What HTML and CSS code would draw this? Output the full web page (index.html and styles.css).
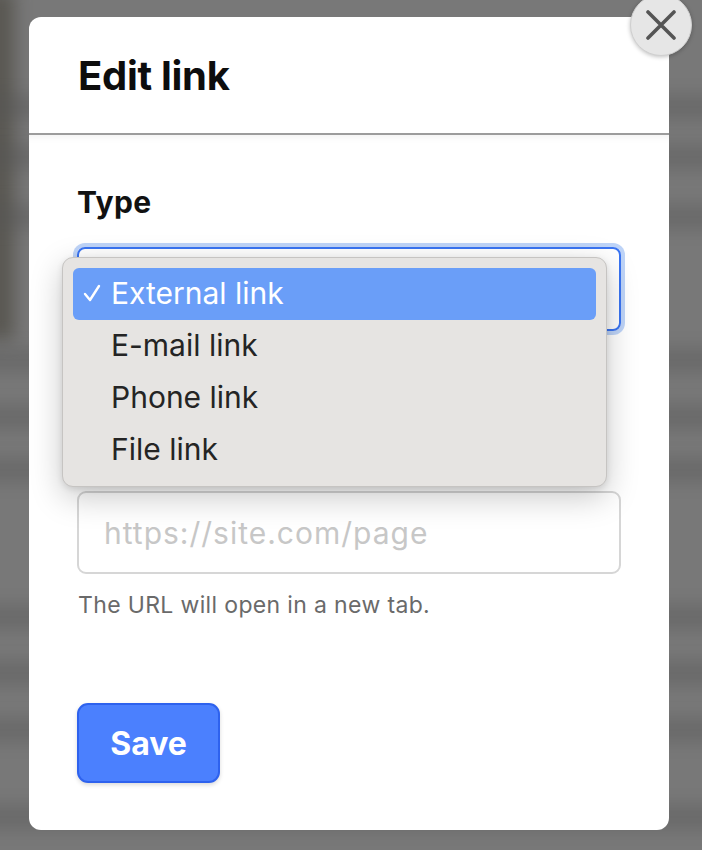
FILE: index.html
```html
<!DOCTYPE html>
<html lang="en">
<head>
<meta charset="utf-8">
<title>Edit link</title>
<link rel="stylesheet" href="styles.css">
</head>
<body>
<div class="backdrop" aria-hidden="true">
  <div class="blob"></div>
  <div class="lines">
    <div class="bar b1"></div>
    <div class="bar b2"></div>
    <div class="bar b3"></div>
    <div class="bar b4"></div>
    <div class="bar b5"></div>
    <div class="bar b6"></div>
    <div class="bar b7"></div>
    <div class="bar b8"></div>
    <div class="bar b9"></div>
    <div class="bar b10"></div>
  </div>
</div>

<div class="modal" role="dialog" aria-labelledby="modal-title">
  <button class="close" aria-label="Close">
    <svg width="30" height="30" viewBox="0 0 30 30" aria-hidden="true">
      <path d="M2 2 L28 28 M28 2 L2 28" stroke="#555" stroke-width="3.6" stroke-linecap="round" fill="none"/>
    </svg>
  </button>
  <header class="modal-header">
    <h1 id="modal-title">Edit link</h1>
  </header>
  <div class="modal-body">
    <div class="field">
      <div class="label">Type</div>
      <div class="select-wrap">
        <div class="select" aria-label="Type"></div>
        <ul class="menu">
          <li class="item selected">
            <svg class="check" width="18" height="18" viewBox="0 0 18 18" aria-hidden="true">
              <path d="M2 10 L7 16 L16 2" stroke="#fff" stroke-width="2.4" stroke-linecap="round" stroke-linejoin="round" fill="none"/>
            </svg>
            External link
          </li>
          <li class="item">E-mail link</li>
          <li class="item">Phone link</li>
          <li class="item">File link</li>
        </ul>
      </div>
    </div>
    <div class="field url-field">
      <div class="input">https://site.com/page</div>
      <p class="help">The URL will open in a new tab.</p>
    </div>
    <button class="save">Save</button>
  </div>
</div>
</body>
</html>
```

FILE: styles.css
```css
html, body {
  margin: 0;
  padding: 0;
}

body {
  font-family: Inter, "Noto Sans", "Liberation Sans", sans-serif;
  background: #777777;
  min-height: 850px;
  overflow: hidden;
}

/* blurred page behind the dialog */
.backdrop {
  position: fixed;
  inset: 0;
  background: #787878;
  overflow: hidden;
}

.blob {
  position: absolute;
  left: -16px;
  top: -10px;
  width: 30px;
  height: 350px;
  background: #4b4840;
  filter: blur(9px);
  opacity: 0.7;
}

.lines {
  display: flex;
  flex-direction: column;
}

.bar {
  height: 18px;
  margin: 0 -30px;
  background: #555555;
  filter: blur(10px);
  opacity: 0.55;
}

.b1 { margin-top: 98px; }
.b2 { margin-top: 32px; }
.b3 { margin-top: 42px; }
.b4 { margin-top: 125px; }
.b5 { margin-top: 39px; }
.b6 { margin-top: 35px; }
.b7 { margin-top: 129px; }
.b8 { margin-top: 38px; }
.b9 { margin-top: 39px; }
.b10 { margin-top: 69px; }

/* dialog */
.modal {
  position: relative;
  z-index: 1;
  width: 640px;
  height: 813px;
  margin: 17px 0 0 29px;
  background: #ffffff;
  border-radius: 12px;
  box-sizing: border-box;
}

.close {
  position: absolute;
  left: 601px;
  top: -23px;
  width: 62px;
  height: 62px;
  border-radius: 50%;
  border: 1px solid #cfcfcf;
  background: #e6e6e6;
  box-shadow: 0 1px 4px rgba(0, 0, 0, 0.25);
  display: flex;
  align-items: center;
  justify-content: center;
  padding: 0;
}

.modal-header {
  padding: 35px 48px 33px 49px;
  border-bottom: 2px solid #9c9c9c;
}

.modal-header h1 {
  margin: 0;
  font-size: 40px;
  line-height: 48px;
  font-weight: 700;
  color: #0d0d0d;
  letter-spacing: -0.3px;
}

.modal-body {
  padding: 50px 48px 48px 48px;
  box-shadow: inset 0 9px 8px -8px rgba(0, 0, 0, 0.07);
}

.label {
  display: block;
  font-size: 30px;
  line-height: 34px;
  font-weight: 700;
  color: #111;
  letter-spacing: 0.4px;
  margin-bottom: 28px;
}

.select-wrap {
  position: relative;
}

.select {
  height: 84px;
  box-sizing: border-box;
  border: 2px solid #3a74f2;
  border-radius: 8px;
  box-shadow: 0 0 0 4px rgba(110, 160, 240, 0.45);
}

.menu {
  position: absolute;
  left: -15px;
  top: 10px;
  width: 545px;
  box-sizing: border-box;
  margin: 0;
  padding: 10px;
  list-style: none;
  background: #e6e4e2;
  border: 1px solid #c6c4c2;
  border-radius: 11px;
  box-shadow: 0 10px 32px rgba(0, 0, 0, 0.22), 0 2px 6px rgba(0, 0, 0, 0.1);
  z-index: 2;
}

.item {
  position: relative;
  height: 52px;
  line-height: 50px;
  padding-left: 38px;
  font-size: 30px;
  color: #242424;
  border-radius: 6px;
}

.item.selected {
  background: #6a9ef8;
  color: #ffffff;
}

.check {
  position: absolute;
  left: 10px;
  top: 16px;
}

.url-field {
  margin-top: 160px;
}

.input {
  height: 83px;
  box-sizing: border-box;
  border: 2px solid #d6d6d6;
  border-radius: 9px;
  padding-left: 25px;
  display: flex;
  align-items: center;
  font-size: 30px;
  letter-spacing: 1px;
  color: #c7c7c7;
}

.help {
  margin: 18px 0 0 1px;
  font-size: 23px;
  line-height: 26px;
  letter-spacing: 0.35px;
  color: #6a6a6a;
}

.save {
  margin-top: 85px;
  width: 143px;
  height: 80px;
  box-sizing: border-box;
  background: #4b80fe;
  border: 2px solid #2e62ee;
  border-radius: 11px;
  color: #ffffff;
  font-family: Inter, "Noto Sans", "Liberation Sans", sans-serif;
  font-size: 32px;
  font-weight: 700;
  box-shadow: 0 2px 4px rgba(0, 0, 0, 0.15);
  padding: 0;
}
```
